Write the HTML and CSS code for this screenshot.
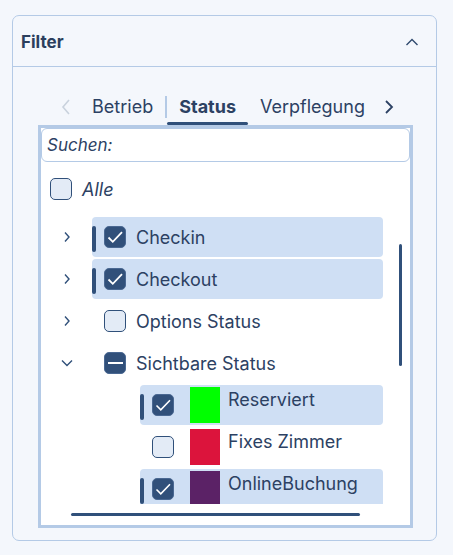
FILE: index.html
```html
<!DOCTYPE html>
<html>
<head>
    <title>Filter</title>
    <link rel="stylesheet" href="styles.css">
</head>
<body>
    <div class="panel">
        <div class="panel-head">
            <span class="panel-title">Filter</span>
            <svg class="collapse" width="14" height="8" viewBox="0 0 14 8"><path d="M1.5 7 L7 1.5 L12.5 7" fill="none" stroke="#2f4a6e" stroke-width="1.4"/></svg>
        </div>
        <div class="panel-body">
            <div class="tabs">
                <span class="tab-arrow off"><svg width="10" height="18" viewBox="0 0 10 18"><path d="M8 2 L2 9 L8 16" fill="none" stroke="currentColor" stroke-width="1.6"/></svg></span>
                <span class="tab">Betrieb</span>
                <span class="tab-sep"></span>
                <span class="tab active">Status</span>
                <span class="tab">Verpflegung</span>
                <span class="tab-arrow"><svg width="10" height="18" viewBox="0 0 10 18"><path d="M2 3 L8 9 L2 15" fill="none" stroke="currentColor" stroke-width="1.8"/></svg></span>
            </div>

            <div class="picker">
                <div class="search">Suchen:</div>
                <div class="tree">
                    <div class="all-row">
                        <span class="cb"></span>
                        <span class="all-label">Alle</span>
                    </div>

                    <div class="node">
                        <span class="toggle"><svg width="8" height="12" viewBox="0 0 8 12"><path d="M2 1.5 L6 6 L2 10.5" fill="none" stroke="currentColor" stroke-width="1.4"/></svg></span>
                        <div class="item selected">
                            <span class="mark"></span>
                            <span class="cb checked"><svg width="22" height="22" viewBox="0 0 22 22"><path d="M4.5 11.5 L8.8 15.8 L18 6.2" fill="none" stroke="#fff" stroke-width="1.8"/></svg></span>
                            <span class="label">Checkin</span>
                        </div>
                    </div>
                    <div class="node">
                        <span class="toggle"><svg width="8" height="12" viewBox="0 0 8 12"><path d="M2 1.5 L6 6 L2 10.5" fill="none" stroke="currentColor" stroke-width="1.4"/></svg></span>
                        <div class="item selected">
                            <span class="mark"></span>
                            <span class="cb checked"><svg width="22" height="22" viewBox="0 0 22 22"><path d="M4.5 11.5 L8.8 15.8 L18 6.2" fill="none" stroke="#fff" stroke-width="1.8"/></svg></span>
                            <span class="label">Checkout</span>
                        </div>
                    </div>
                    <div class="node">
                        <span class="toggle"><svg width="8" height="12" viewBox="0 0 8 12"><path d="M2 1.5 L6 6 L2 10.5" fill="none" stroke="currentColor" stroke-width="1.4"/></svg></span>
                        <div class="item">
                            <span class="mark"></span>
                            <span class="cb"></span>
                            <span class="label">Options Status</span>
                        </div>
                    </div>
                    <div class="node">
                        <span class="toggle"><svg width="14" height="8" viewBox="0 0 14 8"><path d="M2 1.5 L7 6.5 L12 1.5" fill="none" stroke="currentColor" stroke-width="1.4"/></svg></span>
                        <div class="item">
                            <span class="mark"></span>
                            <span class="cb partial"><span class="dash"></span></span>
                            <span class="label">Sichtbare Status</span>
                        </div>
                    </div>

                    <div class="node child">
                        <div class="item selected">
                            <span class="mark"></span>
                            <span class="cb checked"><svg width="22" height="22" viewBox="0 0 22 22"><path d="M4.5 11.5 L8.8 15.8 L18 6.2" fill="none" stroke="#fff" stroke-width="1.6"/></svg></span>
                            <span class="swatch" style="background: #00ff00;"></span>
                            <span class="label top">Reserviert</span>
                        </div>
                    </div>
                    <div class="node child">
                        <div class="item">
                            <span class="mark"></span>
                            <span class="cb"></span>
                            <span class="swatch" style="background: #dc143c;"></span>
                            <span class="label top">Fixes Zimmer</span>
                        </div>
                    </div>
                    <div class="node child">
                        <div class="item selected">
                            <span class="mark"></span>
                            <span class="cb checked"><svg width="22" height="22" viewBox="0 0 22 22"><path d="M4.5 11.5 L8.8 15.8 L18 6.2" fill="none" stroke="#fff" stroke-width="1.6"/></svg></span>
                            <span class="swatch" style="background: #5b2266;"></span>
                            <span class="label top">OnlineBuchung</span>
                        </div>
                    </div>

                    <div class="vscroll"></div>
                </div>
                <div class="hscroll"><div class="hthumb"></div></div>
            </div>
        </div>
    </div>
</body>
</html>
```

FILE: styles.css
```css
* {
    margin: 0;
    padding: 0;
    box-sizing: border-box;
    font-family: Inter, 'Noto Sans', sans-serif;
}

body {
    background: #f4f7fc;
    color: #2c4163;
    padding: 15px 16px 14px 12px;
}

.panel {
    width: 425px;
    border: 1.5px solid #b4cae6;
    border-radius: 7px;
    background: #f4f7fc;
}

.panel-head {
    height: 51px;
    display: flex;
    align-items: center;
    justify-content: space-between;
    padding: 1px 17px 0 8px;
    border-bottom: 1.5px solid #b4cae6;
}

.panel-title {
    font-size: 17px;
    font-weight: 700;
    color: #2b3f5e;
}

.panel-body {
    padding: 25px 21px 12px 25px;
}

/* tabs */
.tabs {
    display: flex;
    justify-content: center;
    align-items: flex-start;
    padding-left: 2px;
}

.tab {
    position: relative;
    font-size: 18px;
    line-height: 22px;
    padding: 4px 12px 7px;
    color: #2c4163;
}

.tab.active {
    font-weight: 700;
}

.tab.active::after {
    content: "";
    position: absolute;
    left: 0;
    right: 0;
    bottom: 0;
    height: 3px;
    border-radius: 2px;
    background: #30507a;
}

.tab-sep {
    width: 2px;
    height: 22px;
    margin-top: 4px;
    background: #b4cae6;
}

.tab-arrow {
    display: flex;
    padding: 6px 0 0;
    color: #2c4163;
    width: 24px;
    justify-content: center;
}

.tab-arrow.off {
    color: #c9d2dd;
    margin-right: 2px;
}

/* picker box */
.picker {
    width: 375px;
    border: 3px solid #b4cae6;
    background: #fff;
}

.search {
    height: 34px;
    border: 1px solid #b4cae6;
    border-radius: 6px;
    padding: 0 5px;
    font-size: 17px;
    font-style: italic;
    line-height: 32px;
    color: #2c4163;
}

.tree {
    position: relative;
    height: 342px;
    overflow: hidden;
    padding-top: 7px;
}

.all-row {
    display: flex;
    align-items: center;
    height: 40px;
    padding-left: 9px;
    gap: 10px;
    margin-bottom: 8px;
}

.all-label {
    font-size: 18px;
    font-style: italic;
}

.node {
    display: flex;
    height: 40px;
    margin-bottom: 2px;
    margin-right: 27px;
}

.node.child {
    padding-left: 99px;
}

.toggle {
    width: 51px;
    display: flex;
    align-items: center;
    justify-content: center;
    color: #30507a;
}

.item {
    flex: 1;
    display: flex;
    align-items: center;
    border-radius: 4px;
}

.item.selected {
    background: #cfdff4;
}

.mark {
    width: 4px;
    height: 26px;
    margin-top: 3px;
    border-radius: 2px;
    margin-right: 8px;
}

.item.selected .mark {
    background: #30507a;
}

.cb {
    width: 22px;
    height: 22px;
    border-radius: 5px;
    border: 1.5px solid #30507a;
    background: #e3ebf6;
    flex-shrink: 0;
    display: flex;
    align-items: center;
    justify-content: center;
}

.cb.checked,
.cb.partial {
    background: #31507a;
    border-color: #4a6892;
}

.cb.checked svg {
    margin: -1.5px;
}

.dash {
    width: 15px;
    height: 2px;
    background: #fff;
}

.label {
    font-size: 18px;
    margin-left: 10px;
    white-space: nowrap;
}

.swatch {
    width: 30px;
    height: 36px;
    margin-left: 16px;
    flex-shrink: 0;
}

.label.top {
    align-self: flex-start;
    margin-left: 8px;
    padding-top: 4px;
    line-height: 22px;
}

.vscroll {
    position: absolute;
    right: 8px;
    top: 82px;
    width: 3px;
    height: 122px;
    border-radius: 2px;
    background: #30507a;
}

.hscroll {
    height: 21px;
    padding: 9px 0 0 30px;
}

.hthumb {
    width: 289px;
    height: 3px;
    border-radius: 2px;
    background: #30507a;
}
```
